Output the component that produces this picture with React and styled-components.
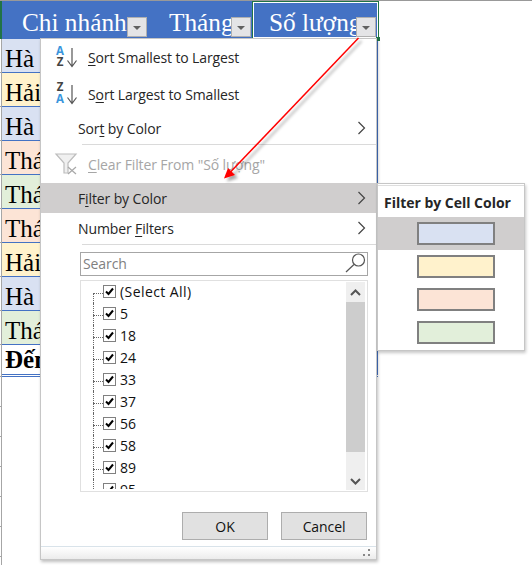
import React from "react";
import styled, { createGlobalStyle } from "styled-components";

const Global = createGlobalStyle`
  html, body { margin: 0; padding: 0; background: #fff; }
  #root { width: 532px; height: 565px; overflow: hidden; }
`;

const Sheet = styled.div`
  position: relative;
  width: 532px;
  height: 565px;
  overflow: hidden;
  background: #fff;
  border-top: 1px solid #999;
  box-sizing: border-box;
  font-family: "Open Sans", "Noto Sans", sans-serif;
`;
const Body = styled.div`
  display: flex;
`;
const RowRail = styled.div`
  width: 2px;
  flex: none;
  display: flex;
  flex-direction: column;
`;
const RailSelected = styled.div`
  height: 38px;
  background: #217346;
`;
const RailCell = styled.div`
  height: ${(p) => p.$h - 1}px;
  border-right: 1px solid #a6a6a6;
  border-bottom: 1px solid #a6a6a6;
`;
const Table = styled.div`
  width: 376px;
  flex: none;
  display: flex;
  flex-direction: column;
`;
const HeaderRow = styled.div`
  display: grid;
  grid-template-columns: 250px 126px;
  height: 38px;
  background: #4472c4;
`;
const HeadGroup = styled.div`
  display: grid;
  grid-template-columns: 147px 103px;
`;
const HeadCell = styled.div`
  position: relative;
  box-sizing: border-box;
  height: 38px;
  padding: 6px 0 0 ${(p) => p.$pad}px;
  font: 25.3px/31px "Liberation Serif", serif;
  color: #fff;
  white-space: nowrap;
  ${(p) => p.$selected && `
    padding-top: 5px;
    margin-right: -1px;
    border: 1px solid #217346;
    box-shadow: inset 0 0 0 1px #fff;
  `}
`;
const FilterButton = styled.div`
  position: absolute;
  right: ${(p) => p.$right}px;
  bottom: ${(p) => p.$bottom}px;
  width: 20px;
  height: 20px;
  box-sizing: border-box;
  border: 1px solid #b0b0b0;
  background: #e4e4e6;
  display: flex;
  align-items: center;
  justify-content: center;
  &::after {
    content: "";
    margin-top: 2px;
    border-left: 4px solid transparent;
    border-right: 4px solid transparent;
    border-top: 4px solid #606060;
  }
`;
const Handle = styled.div`
  position: absolute;
  left: 376px;
  top: 36px;
  width: 4px;
  height: 4px;
  background: #217346;
`;
const DataRow = styled.div`
  height: ${(p) => (p.$bold ? 29 : 33)}px;
  border-bottom: ${(p) => (p.$bold ? "none" : "1px solid #4472c4")};
  background: ${(p) => p.$bg};
  padding-left: 3px;
  font: ${(p) => (p.$bold ? "bold 25px/30px" : "normal 25px/39px")} "Liberation Serif", serif;
  color: #000;
  white-space: nowrap;
  overflow: hidden;
  box-shadow: inset -1px 0 0 #4472c4;
`;
const DoubleRule = styled.div`
  height: 3px;
  border-top: 1px solid #4472c4;
  border-bottom: 1px solid #4472c4;
  box-sizing: border-box;
  width: 376px;
`;

const Menu = styled.div`
  position: absolute;
  left: 40px;
  top: 37px;
  width: 337px;
  height: 522px;
  box-sizing: border-box;
  background: #fff;
  border: 1px solid #c6c6c6;
  box-shadow: 1px 2px 3px rgba(0, 0, 0, 0.25);
  display: flex;
  flex-direction: column;
  font-size: 14px;
  color: #262626;
`;
const Item = styled.div`
  position: relative;
  flex: none;
  height: ${(p) => p.$h}px;
  display: flex;
  align-items: center;
  padding-left: ${(p) => p.$pad}px;
  background: ${(p) => (p.$active ? "#d0cece" : "transparent")};
  color: ${(p) => (p.$disabled ? "#a6a6a6" : "inherit")};
  white-space: nowrap;
  letter-spacing: -0.12px;
`;
const ItemIcon = styled.svg`
  position: absolute;
  left: 13px;
  top: ${(p) => p.$top}px;
`;
const Chevron = styled.svg`
  position: absolute;
  right: 10px;
  top: ${(p) => p.$top}px;
`;
const Separator = styled.div`
  flex: none;
  height: 1px;
  margin-left: 41px;
  background: #dadada;
`;
const SearchBox = styled.div`
  flex: none;
  margin: 7px 8px 0 39px;
  height: 24px;
  box-sizing: border-box;
  border: 1px solid #a6a6a6;
  padding: 0 0 2px 2px;
  display: flex;
  align-items: center;
  justify-content: space-between;
  color: #808080;
  letter-spacing: -0.1px;
`;
const ListBox = styled.div`
  flex: none;
  margin: 4px 8px 0 39px;
  height: 212px;
  box-sizing: border-box;
  border: 1px solid #e0e0e0;
  display: flex;
  justify-content: space-between;
  overflow: hidden;
`;
const TreeList = styled.div`
  position: relative;
  height: 208px;
  overflow: hidden;
  padding: 0 0 0 12px;
  flex: 1;
`;
const TreeRow = styled.div`
  position: relative;
  height: 22px;
  box-sizing: border-box;
  display: flex;
  align-items: center;
  padding: 0 0 1px 10px;
  color: #111;
  letter-spacing: ${(p) => (p.$first ? "0.42px" : "-0.1px")};
  &::before {
    content: "";
    position: absolute;
    left: 0;
    top: ${(p) => (p.$first ? 12 : 0)}px;
    height: ${(p) => (p.$first ? 10 : 22)}px;
    border-left: 1px dotted #666;
  }
  &::after {
    content: "";
    position: absolute;
    left: 0;
    top: 12px;
    width: 10px;
    border-top: 1px dotted #666;
  }
`;
const CheckBox = styled.span`
  width: 13px;
  height: 13px;
  box-sizing: border-box;
  border: 1px solid #808080;
  background: #fff;
  margin-right: 4px;
  display: flex;
  align-items: center;
  justify-content: center;
  flex: none;
`;
const ScrollBar = styled.div`
  width: 19px;
  flex: none;
  margin: 1px 2px 1px 0;
  background: #efefef;
  display: flex;
  flex-direction: column;
`;
const ScrollButton = styled.div`
  height: ${(p) => p.$h}px;
  display: flex;
  justify-content: center;
  align-items: ${(p) => (p.$end ? "flex-end" : "center")};
  padding-bottom: ${(p) => (p.$end ? 5 : 0)}px;
  box-sizing: border-box;
`;
const ScrollThumb = styled.div`
  height: 150px;
  background: #cdcdcd;
`;
const ButtonRow = styled.div`
  flex: none;
  margin: 20px 9px 0 0;
  display: flex;
  justify-content: flex-end;
  gap: 13px;
`;
const Button = styled.div`
  width: 86px;
  height: 28px;
  box-sizing: border-box;
  border: 1px solid #adadad;
  background: #e1e1e1;
  display: flex;
  align-items: center;
  justify-content: center;
  color: #111;
  letter-spacing: -0.1px;
`;
const Footer = styled.div`
  position: relative;
  flex: none;
  margin-top: 6px;
  height: 12px;
  border-top: 1px solid #d9e3ea;
  background: linear-gradient(#fff, #ececec);
`;
const Gripper = styled.svg`
  position: absolute;
  right: 5px;
  bottom: 1px;
`;

const SubMenu = styled.div`
  position: absolute;
  left: 377px;
  top: 182px;
  width: 148px;
  height: 168px;
  box-sizing: border-box;
  background: #fff;
  border: 1px solid #c6c6c6;
  box-shadow: 1px 2px 3px rgba(0, 0, 0, 0.22);
  font-size: 14px;
  color: #262626;
`;
const SubTitle = styled.div`
  height: 32px;
  margin-top: 1px;
  border-top: 1px solid #dedede;
  padding-left: 6px;
  box-sizing: border-box;
  line-height: 34px;
  font-weight: 700;
  letter-spacing: -0.02px;
  white-space: nowrap;
`;
const SwatchRow = styled.div`
  height: 33px;
  display: flex;
  align-items: center;
  justify-content: flex-start;
  padding-left: 39px;
  background: ${(p) => (p.$active ? "#d0cece" : "transparent")};
`;
const Swatch = styled.div`
  width: 78px;
  height: 23px;
  box-sizing: border-box;
  border: 2px solid #808080;
  background: ${(p) => p.$bg};
`;
const ArrowLayer = styled.svg`
  position: absolute;
  left: 0;
  top: -1px;
  pointer-events: none;
`;
const Mnemonic = styled.span`
  text-decoration: underline;
  text-underline-offset: 2px;
  text-decoration-thickness: 1px;
`;

const chevron = (
  <path d="M1.5 1 L7.5 7 L1.5 13" fill="none" stroke="#444" strokeWidth="1.2" />
);

const SortIcon = ({ first, second, firstColor, secondColor, y1 }) => (
  <ItemIcon $top={4} width="26" height="30" viewBox="0 0 26 30">
    <text x="6" y={y1} textAnchor="middle" fontFamily="Open Sans" fontWeight="700" fontSize="11.5" fill={firstColor}>{first}</text>
    <text x="6" y="23" textAnchor="middle" fontFamily="Open Sans" fontWeight="700" fontSize="11.5" fill={secondColor}>{second}</text>
    <path d="M18 5 V23 M13.5 17.5 L18 23.5 L22.5 17.5" fill="none" stroke="#555" strokeWidth="1.2" />
  </ItemIcon>
);

const rows = [
  ["Hà Nội", "#d9e1f2"],
  ["Hải Phòng", "#fff2cc"],
  ["Hà Nội", "#d9e1f2"],
  ["Thái Bình", "#fce4d6"],
  ["Thái Nguyên", "#e2efda"],
  ["Thái Bình", "#fce4d6"],
  ["Hải Phòng", "#fff2cc"],
  ["Hà Nội", "#d9e1f2"],
  ["Thái Nguyên", "#e2efda"],
];
const railHeights = [34, 34, 34, 34, 34, 34, 34, 34, 34, 32, 30, 30, 30, 30, 30, 30, 30];
const values = ["(Select All)", "5", "18", "24", "33", "37", "56", "58", "89", "95"];
const swatches = ["#d9e1f2", "#fff2cc", "#fce4d6", "#e2efda"];

export default function App() {
  return (
    <Sheet>
      <Global />
      <Body>
        <RowRail>
          <RailSelected />
          {railHeights.map((h, i) => (
            <RailCell key={i} $h={h} />
          ))}
        </RowRail>
        <Table>
          <HeaderRow>
            <HeadGroup>
              <HeadCell $pad={20}>Chi nhánh<FilterButton $right={2} $bottom={2} /></HeadCell>
              <HeadCell $pad={20}>Tháng<FilterButton $right={1} $bottom={2} /></HeadCell>
            </HeadGroup>
            <HeadCell $pad={16} $selected>Số lượng<FilterButton $right={2} $bottom={1} /></HeadCell>
          </HeaderRow>
          {rows.map(([name, bg], i) => (
            <DataRow key={i} $bg={bg}>{name}</DataRow>
          ))}
          <DataRow $bg="#fff" $bold>Đến</DataRow>
          <DoubleRule />
        </Table>
      </Body>
      <Handle />

      <Menu>
        <Item $h={37} $pad={47}>
          <SortIcon y1={12} first="A" second="Z" firstColor="#3a96dd" secondColor="#444" />
          <span><Mnemonic>S</Mnemonic>ort Smallest to Largest</span>
        </Item>
        <Item $h={37} $pad={47}>
          <SortIcon y1={11} first="Z" second="A" firstColor="#444" secondColor="#3a96dd" />
          <span>S<Mnemonic>o</Mnemonic>rt Largest to Smallest</span>
        </Item>
        <Item $h={31} $pad={37}>
          <span>Sor<Mnemonic>t</Mnemonic> by Color</span>
          <Chevron $top={8} width="9" height="14" viewBox="0 0 9 14">{chevron}</Chevron>
        </Item>
        <Separator />
        <Item $h={38} $pad={47} $disabled>
          <ItemIcon $top={7} width="24" height="24" viewBox="0 0 24 24">
            <path d="M2 2 H22 L14 11 V21 L10 21 V11 Z" fill="#f0f0f0" stroke="#bdbdbd" strokeWidth="1.2" />
            <path d="M14 15 L22 22 M22 15 L14 22" fill="none" stroke="#a8a8a8" strokeWidth="1.2" />
          </ItemIcon>
          <span><Mnemonic>C</Mnemonic>lear Filter From "Số lượng"</span>
        </Item>
        <Item $h={30} $pad={37} $active>
          <span>F<Mnemonic>i</Mnemonic>lter by Color</span>
          <Chevron $top={8} width="9" height="14" viewBox="0 0 9 14">{chevron}</Chevron>
        </Item>
        <Item $h={31} $pad={37}>
          <span>Number <Mnemonic>F</Mnemonic>ilters</span>
          <Chevron $top={8} width="9" height="14" viewBox="0 0 9 14">{chevron}</Chevron>
        </Item>
        <Separator />
        <SearchBox>
          <span>Search</span>
          <svg width="22" height="22" viewBox="0 0 22 22">
            <circle cx="13.5" cy="8" r="6" fill="none" stroke="#555" strokeWidth="1.2" />
            <path d="M9 12.5 L1 20" stroke="#555" strokeWidth="1.2" />
          </svg>
        </SearchBox>
        <ListBox>
          <TreeList>
            {values.map((v, i) => (
              <TreeRow key={v} $first={i === 0}>
                <CheckBox>
                  <svg width="11" height="11" viewBox="0 0 11 11">
                    <path d="M2 5.5 L4.5 8 L9 2.5" fill="none" stroke="#000" strokeWidth="2" />
                  </svg>
                </CheckBox>
                {v}
              </TreeRow>
            ))}
          </TreeList>
          <ScrollBar>
            <ScrollButton $h={20}>
              <svg width="11" height="7" viewBox="0 0 11 7"><path d="M1 6 L5.5 1.5 L10 6" fill="none" stroke="#555" strokeWidth="2" /></svg>
            </ScrollButton>
            <ScrollThumb />
            <ScrollButton $h={38} $end>
              <svg width="11" height="7" viewBox="0 0 11 7"><path d="M1 1 L5.5 5.5 L10 1" fill="none" stroke="#555" strokeWidth="2" /></svg>
            </ScrollButton>
          </ScrollBar>
        </ListBox>
        <ButtonRow>
          <Button>OK</Button>
          <Button>Cancel</Button>
        </ButtonRow>
        <Footer>
          <Gripper width="8" height="9" viewBox="0 0 8 9">
            <rect x="5" y="0" width="2" height="2" fill="#888" />
            <rect x="5" y="5" width="2" height="2" fill="#888" />
            <rect x="0" y="5" width="2" height="2" fill="#888" />
          </Gripper>
        </Footer>
      </Menu>

      <SubMenu>
        <SubTitle>Filter by Cell Color</SubTitle>
        {swatches.map((c, i) => (
          <SwatchRow key={c} $active={i === 0}>
            <Swatch $bg={c} />
          </SwatchRow>
        ))}
      </SubMenu>

      <ArrowLayer width="532" height="565" viewBox="0 0 532 565">
        <defs>
          <filter id="arrowShadow" x="-20%" y="-20%" width="140%" height="140%">
            <feDropShadow dx="3" dy="3" stdDeviation="1.6" floodColor="#000" floodOpacity="0.35" />
          </filter>
        </defs>
        <g filter="url(#arrowShadow)">
          <path d="M358.5 38 L230 172.5" stroke="#f00" strokeWidth="1.5" fill="none" />
          <path d="M224 178.5 L228 168 L235 175 Z" fill="#f00" />
        </g>
      </ArrowLayer>
    </Sheet>
  );
}
